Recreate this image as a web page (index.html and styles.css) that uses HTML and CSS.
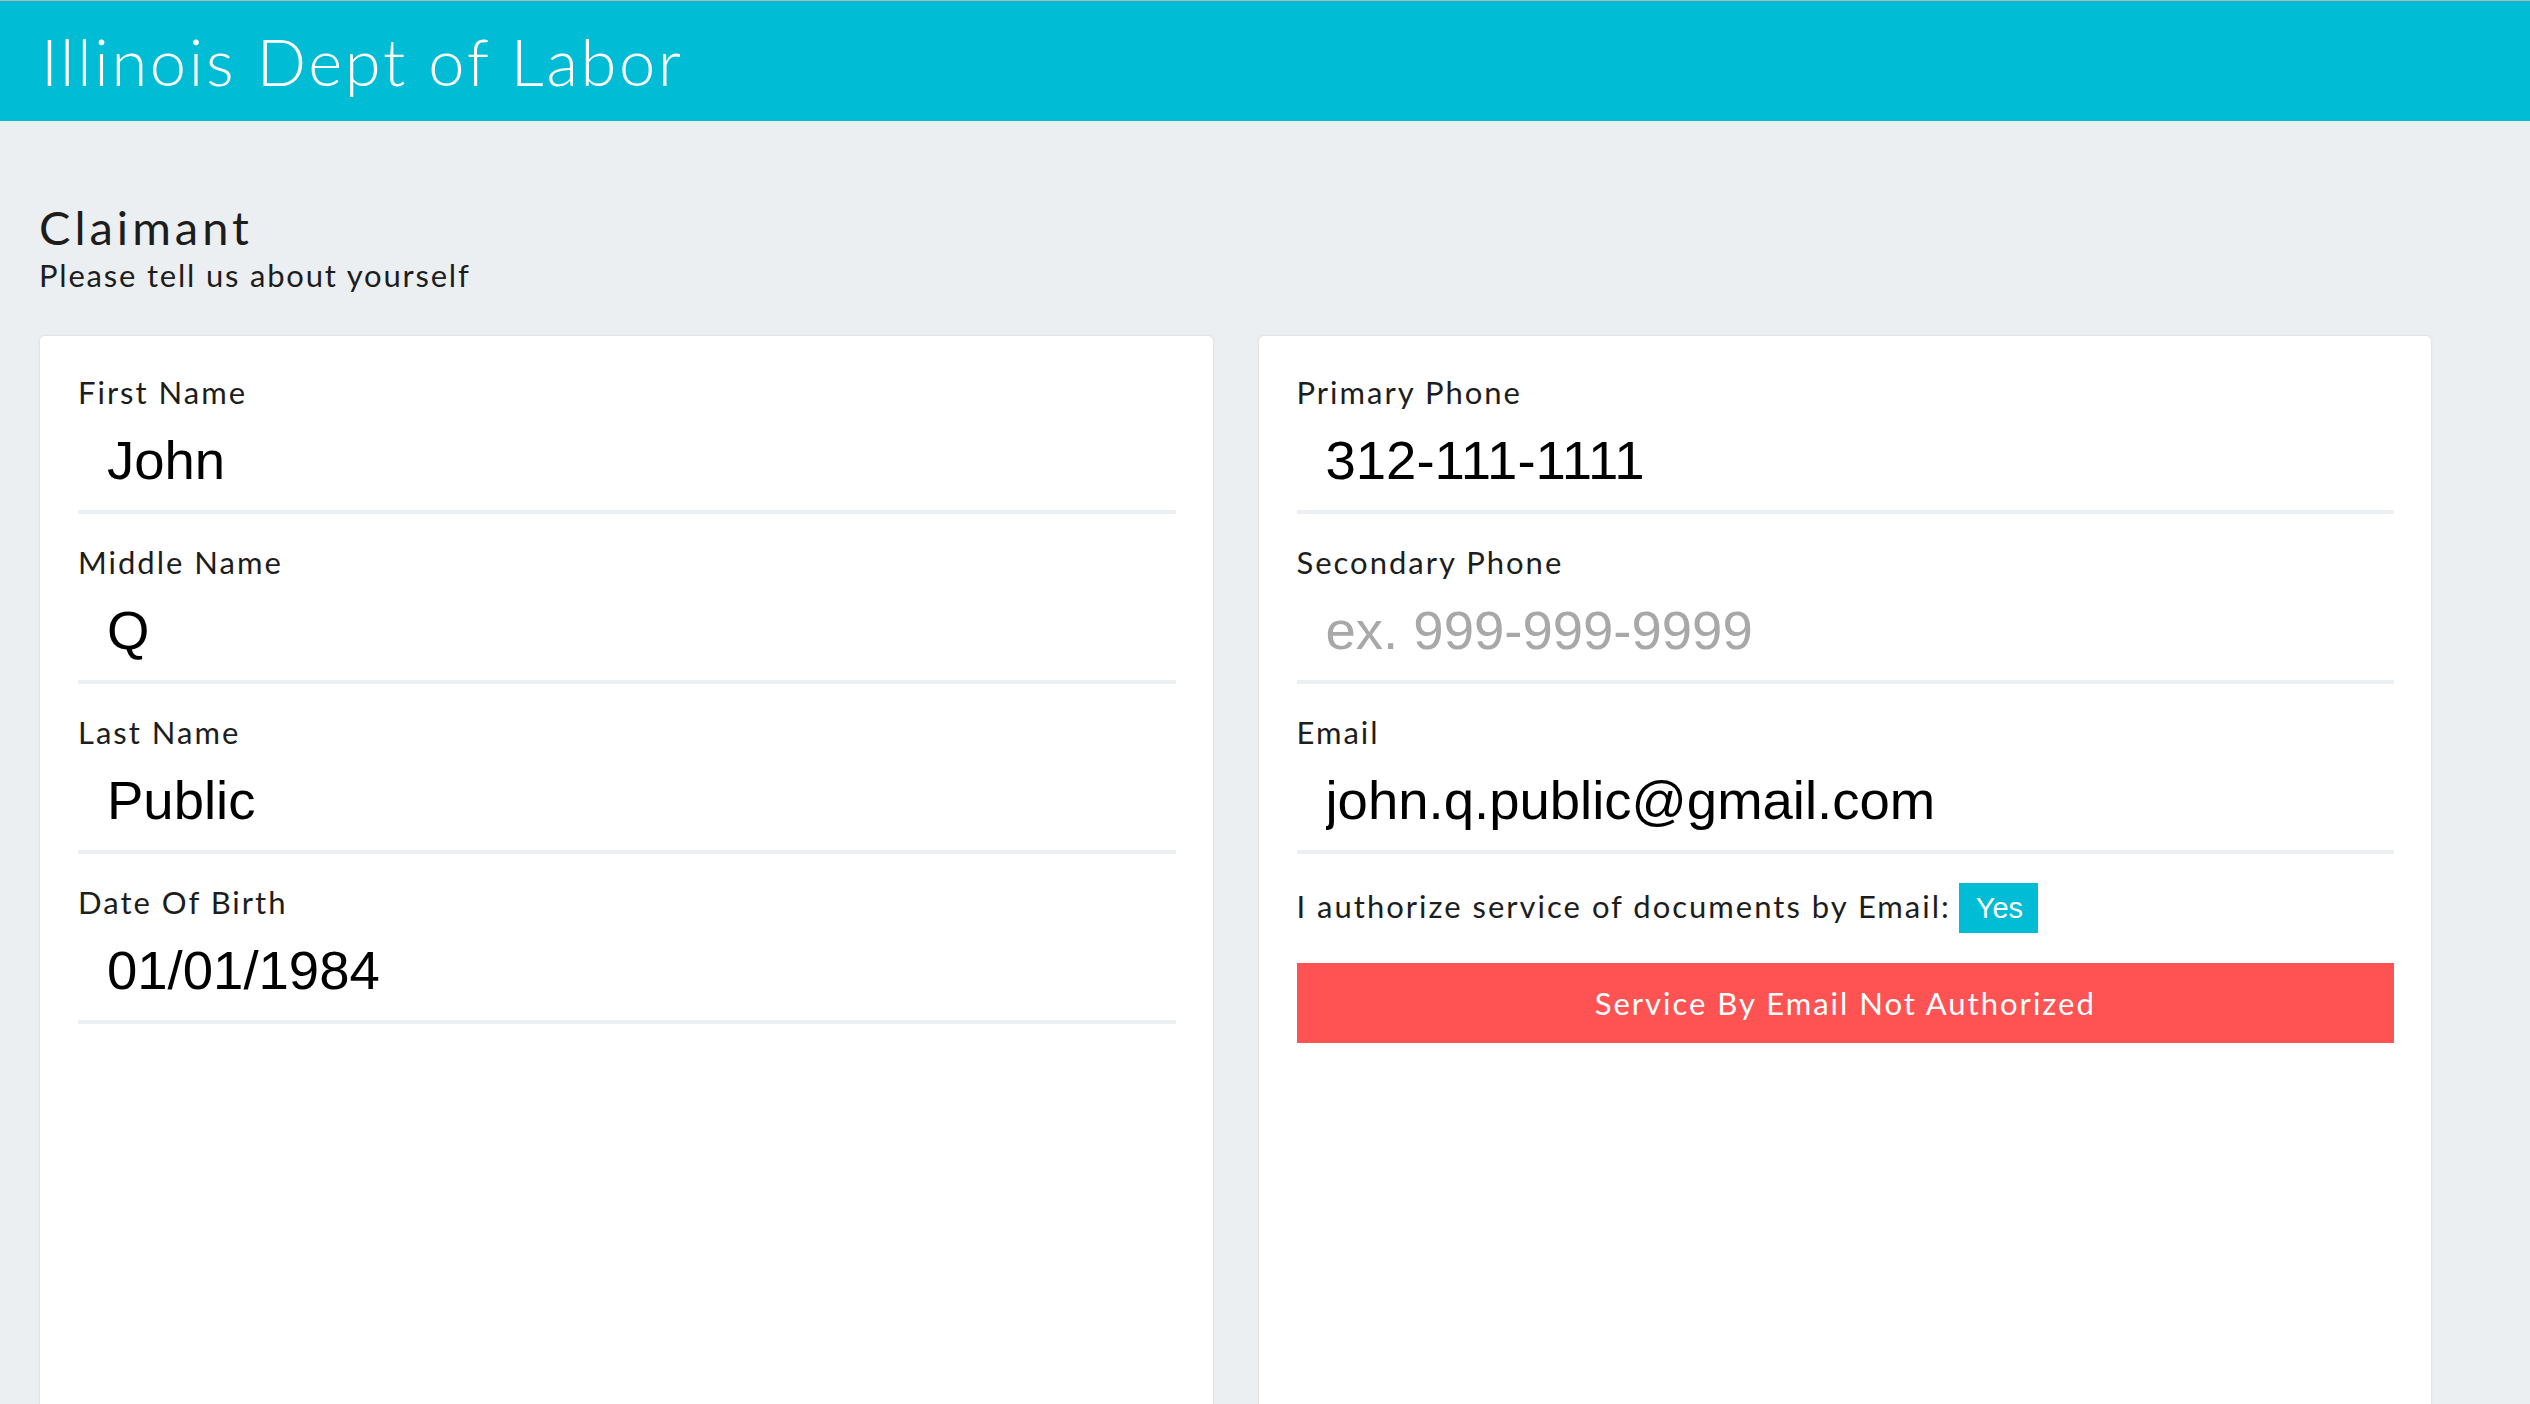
FILE: index.html
```html
<!DOCTYPE html>
<html lang="en">
<head>
<meta charset="utf-8">
<title>Illinois Dept of Labor</title>
<link rel="stylesheet" href="styles.css">
</head>
<body>
<header class="topbar">
  <h1 class="brand">Illinois Dept of Labor</h1>
</header>
<main class="page">
  <section class="intro">
    <h2 class="section-title">Claimant</h2>
    <p class="section-sub">Please tell us about yourself</p>
  </section>
  <div class="cards">
    <div class="card">
      <div class="field">
        <label class="field-label">First Name</label>
        <input class="field-input" type="text" value="John">
      </div>
      <div class="field">
        <label class="field-label">Middle Name</label>
        <input class="field-input" type="text" value="Q">
      </div>
      <div class="field">
        <label class="field-label">Last Name</label>
        <input class="field-input" type="text" value="Public">
      </div>
      <div class="field">
        <label class="field-label">Date Of Birth</label>
        <input class="field-input" type="text" value="01/01/1984">
      </div>
    </div>
    <div class="card">
      <div class="field">
        <label class="field-label">Primary Phone</label>
        <input class="field-input" type="text" value="312-111-1111">
      </div>
      <div class="field">
        <label class="field-label">Secondary Phone</label>
        <input class="field-input" type="text" placeholder="ex. 999-999-9999">
      </div>
      <div class="field">
        <label class="field-label">Email</label>
        <input class="field-input" type="text" value="john.q.public@gmail.com">
      </div>
      <div class="authorize">
        <span class="authorize-text">I authorize service of documents by Email:</span>
        <span class="badge">Yes</span>
      </div>
      <div class="alert">Service By Email Not Authorized</div>
    </div>
  </div>
</main>
</body>
</html>
```
FILE: styles.css
```css
html, body {
  margin: 0;
  padding: 0;
}
body {
  background: #eceff1;
  font-family: "Lato", "Open Sans", sans-serif;
  color: #1d1d1d;
  overflow: hidden;
  height: 1404px;
}
.topbar {
  height: 120px;
  border-top: 1px solid #b4b4b4;
  background: #00bcd4;
  display: flex;
  align-items: center;
  padding-left: 41px;
}
.brand {
  margin: 0;
  color: #ffffff;
  font-family: "Lato", sans-serif;
  font-weight: 300;
  font-size: 65px;
  letter-spacing: 2.7px;
  line-height: 1;
}
.page {
  padding: 0 98px 0 39px;
}
.intro {
  padding-top: 81px;
  padding-bottom: 42px;
}
.section-title {
  margin: 0;
  font-weight: 400;
  font-size: 47px;
  line-height: 50px;
  letter-spacing: 4px;
}
.section-sub {
  margin: 5px 0 0 0;
  font-size: 31px;
  line-height: 36px;
  letter-spacing: 1.8px;
}
.cards {
  display: grid;
  grid-template-columns: 1fr 1fr;
  gap: 44px;
}
.card {
  background: #ffffff;
  border: 1px solid #e2e4e6;
  border-radius: 6px;
  box-shadow: 0 0 2px rgba(0, 0, 0, 0.06);
  padding: 37px 37px 0 38px;
  min-height: 1200px;
}
.field {
  display: flex;
  flex-direction: column;
  margin-bottom: 29px;
}
.field-label {
  font-size: 31px;
  line-height: 38px;
  letter-spacing: 2px;
  color: #1d1d1d;
}
.field-input {
  border: none;
  border-bottom: 4px solid #eceff1;
  outline: none;
  background: transparent;
  height: 99px;
  padding: 0 0 0 29px;
  margin: 0;
  font-family: "Liberation Sans", Arial, sans-serif;
  font-size: 54.5px;
  color: #000000;
  box-sizing: content-box;
}
.field-input::placeholder {
  color: #a8a8a8;
}
.authorize {
  display: flex;
  align-items: baseline;
  margin-top: 1px;
}
.authorize-text {
  font-size: 31px;
  letter-spacing: 2px;
  margin-right: 8px;
}
.badge {
  display: inline-block;
  background: #00bcd4;
  color: #ffffff;
  font-family: "Liberation Sans", Arial, sans-serif;
  font-size: 29px;
  line-height: 50px;
  height: 50px;
  padding: 0 15px 0 17px;
}
.alert {
  margin-top: 30px;
  height: 80px;
  background: #ff5252;
  color: #ffffff;
  display: flex;
  align-items: center;
  justify-content: center;
  font-size: 31px;
  letter-spacing: 2px;
}
```
